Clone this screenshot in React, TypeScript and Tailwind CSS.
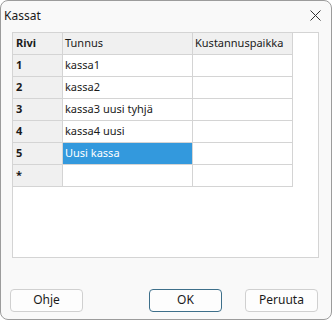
import React from "react";

const rows = [
  { nro: "1", tunnus: "kassa1" },
  { nro: "2", tunnus: "kassa2" },
  { nro: "3", tunnus: "kassa3 uusi tyhjä" },
  { nro: "4", tunnus: "kassa4 uusi" },
  { nro: "5", tunnus: "Uusi kassa", selected: true },
  { nro: "*", tunnus: "" },
];

function DialogButton({ label, primary }: { label: string; primary?: boolean }) {
  return (
    <button
      className={
        "h-[23px] w-[73px] rounded-[4px] border bg-[#fdfdfd] text-[12px] text-[#1a1a1a] " +
        (primary ? "border-[#3d6f8a]" : "border-[#d0d0d0]")
      }
    >
      {label}
    </button>
  );
}

export default function App() {
  return (
    <div
      className="flex h-[320px] w-[332px] flex-col overflow-hidden rounded-[8px] border border-[#9c9c9c] bg-[#f9f9f9] text-[#1a1a1a]"
      style={{ fontFamily: '"Noto Sans", "Open Sans", sans-serif' }}
    >
      {/* title bar */}
      <div className="flex h-[30px] items-center justify-between pl-[3px] pr-[10px]">
        <span className="text-[12px]">Kassat</span>
        <svg width="11" height="11" viewBox="0 0 11 11" className="mt-[-2px]">
          <path d="M0.5 0.5 L10.5 10.5 M10.5 0.5 L0.5 10.5" stroke="#333" strokeWidth="1" />
        </svg>
      </div>

      {/* grid */}
      <div className="ml-[11px] mt-[1px] h-[226px] w-[307px] border border-[#d4d4d4] bg-white text-[11px]">
        <div className="flex h-[22px]">
          <div className="flex w-[50px] items-center border-b border-r border-[#d4d4d4] bg-[#f0f0f0] pl-[3px] font-bold">
            Rivi
          </div>
          <div className="flex w-[130px] items-center border-b border-r border-[#d4d4d4] bg-[#f0f0f0] pl-[2px]">
            Tunnus
          </div>
          <div className="flex w-[100px] items-center border-b border-r border-[#d4d4d4] bg-[#f0f0f0] pl-[2px]">
            Kustannuspaikka
          </div>
        </div>
        {rows.map((r) => (
          <div key={r.nro} className="flex h-[22px]">
            <div className="flex w-[50px] items-center border-b border-r border-[#d4d4d4] bg-[#f0f0f0] pl-[3px] font-bold">
              {r.nro}
            </div>
            <div
              className={
                "flex w-[130px] items-center border-b border-r border-[#d4d4d4] pl-[2px] " +
                (r.selected ? "bg-[#3399dd] text-white" : "")
              }
            >
              {r.tunnus}
            </div>
            <div className="w-[100px] border-b border-r border-[#d4d4d4]" />
          </div>
        ))}
      </div>

      {/* buttons */}
      <div className="mt-[28px] flex">
        <div className="ml-[9px]">
          <DialogButton label="Ohje" />
        </div>
        <div className="ml-[66px]">
          <DialogButton label="OK" primary />
        </div>
        <div className="ml-[23px]">
          <DialogButton label="Peruuta" />
        </div>
      </div>
    </div>
  );
}
